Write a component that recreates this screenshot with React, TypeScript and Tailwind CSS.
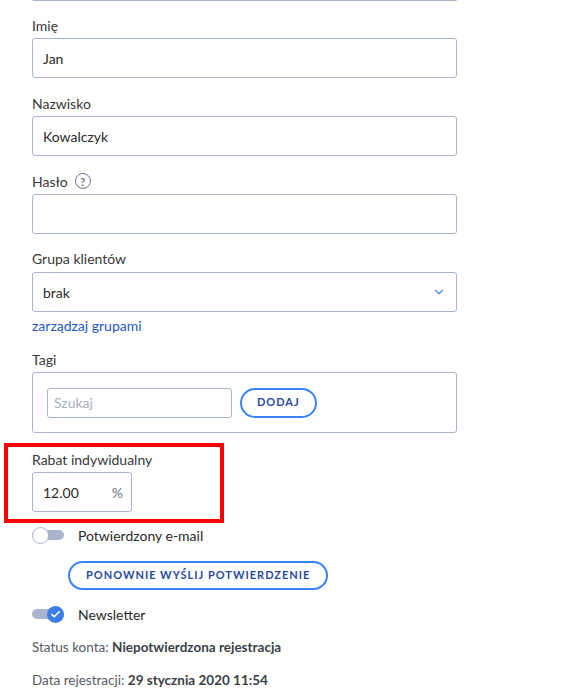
import { ChevronDown, Check } from "lucide-react";

const font = { fontFamily: '"Source Sans Pro", Lato, "Noto Sans", sans-serif' };

function Field({ label, value, help }: { label: string; value?: string; help?: boolean }) {
  return (
    <div className="flex flex-col">
      <label className="flex items-center gap-[7px] h-[24px] pb-[2px] text-[14px] text-[#383838]">
        {label}
        {help && (
          <span className="w-[16px] h-[16px] rounded-full border-[1.5px] border-[#6b7488] text-[#6b7488] text-[11px] font-bold flex items-center justify-center leading-none">
            ?
          </span>
        )}
      </label>
      <div className="h-[40px] border border-[#a9b5cf] rounded-[3px] px-[10px] flex items-center text-[14px] text-[#2b2b2b]">
        {value}
      </div>
    </div>
  );
}

function Toggle({ on }: { on: boolean }) {
  return (
    <div className="relative w-[32px] h-[16px] flex items-center">
      <div className="w-full h-[10px] rounded-full bg-[#aab4cc]" />
      {on ? (
        <div className="absolute right-0 w-[17px] h-[17px] rounded-full bg-[#3b7fe6] flex items-center justify-center">
          <Check className="w-[11px] h-[11px] text-white" strokeWidth={3.5} />
        </div>
      ) : (
        <div className="absolute left-0 w-[17px] h-[17px] rounded-full bg-white border border-[#a9b5cf]" />
      )}
    </div>
  );
}

export default function App() {
  return (
    <div className="w-[588px] h-[699px] bg-white overflow-hidden relative" style={font}>
      <div className="pl-[32px] w-[457px]">
        <div className="h-[2px] -mt-px border-b border-x border-[#a9b5cf] rounded-b-[3px]" />
        <div className="flex flex-col gap-[14px] mt-[13px]">
          <Field label="Imię" value="Jan" />
          <Field label="Nazwisko" value="Kowalczyk" />
          <Field label="Hasło" help />
          <div className="flex flex-col">
            <label className="h-[24px] text-[14px] text-[#383838]">Grupa klientów</label>
            <div className="h-[40px] border border-[#a9b5cf] rounded-[3px] px-[10px] flex items-center justify-between text-[14px] text-[#2b2b2b]">
              brak
              <ChevronDown className="w-[14px] h-[14px] text-[#4a86e8]" strokeWidth={2} />
            </div>
            <a className="mt-[3px] text-[14px] text-[#2359c4]">zarządzaj grupami</a>
          </div>
          <div className="flex flex-col -mt-[1px]">
            <label className="h-[23px] pb-[2px] text-[14px] text-[#383838]">Tagi</label>
            <div className="h-[61px] border border-[#a9b5cf] rounded-[3px] px-[14px] flex items-center gap-[8px]">
              <div className="w-[185px] h-[30px] border border-[#a9b5cf] rounded-[3px] px-[6px] flex items-center text-[14px] text-[#a9b0c0]">
                Szukaj
              </div>
              <button className="h-[30px] px-[15px] rounded-full border-2 border-[#3b82f6] text-[11px] font-bold tracking-[1px] text-[#2a4aa0]">
                DODAJ
              </button>
            </div>
          </div>
        </div>
      </div>

      <div className="ml-[4px] mt-[10px] w-[220px] border-[4px] border-[#ff0000] pl-[24px] pt-[2px] pb-[7px]">
        <label className="block h-[23px] pb-[2px] text-[14px] text-[#383838]">Rabat indywidualny</label>
        <div className="w-[100px] h-[40px] border border-[#a9b5cf] rounded-[3px] pl-[10px] pr-[8px] flex items-center justify-between text-[14px] text-[#2b2b2b]">
          12.00
          <span className="text-[#6b7488]">%</span>
        </div>
      </div>

      <div className="pl-[32px] flex flex-col">
        <div className="flex items-center gap-[14px] mt-[3px] h-[18px]">
          <Toggle on={false} />
          <span className="text-[14px] text-[#2b2b2b]">Potwierdzony e-mail</span>
        </div>
        <button className="ml-[36px] mt-[17px] self-start h-[29px] px-[16px] rounded-full border-2 border-[#3b82f6] text-[11px] font-bold tracking-[1px] text-[#2a4aa0]">
          PONOWNIE WYŚLIJ POTWIERDZENIE
        </button>
        <div className="flex items-center gap-[14px] mt-[15px] h-[18px]">
          <Toggle on />
          <span className="text-[14px] text-[#2b2b2b]">Newsletter</span>
        </div>
        <p className="mt-[14px] text-[13.5px] text-[#555b66]">
          Status konta: <b className="text-[#3b3f48]">Niepotwierdzona rejestracja</b>
        </p>
        <p className="mt-[13px] text-[13.5px] text-[#555b66]">
          Data rejestracji: <b className="text-[#3b3f48]">29 stycznia 2020 11:54</b>
        </p>
      </div>
    </div>
  );
}
